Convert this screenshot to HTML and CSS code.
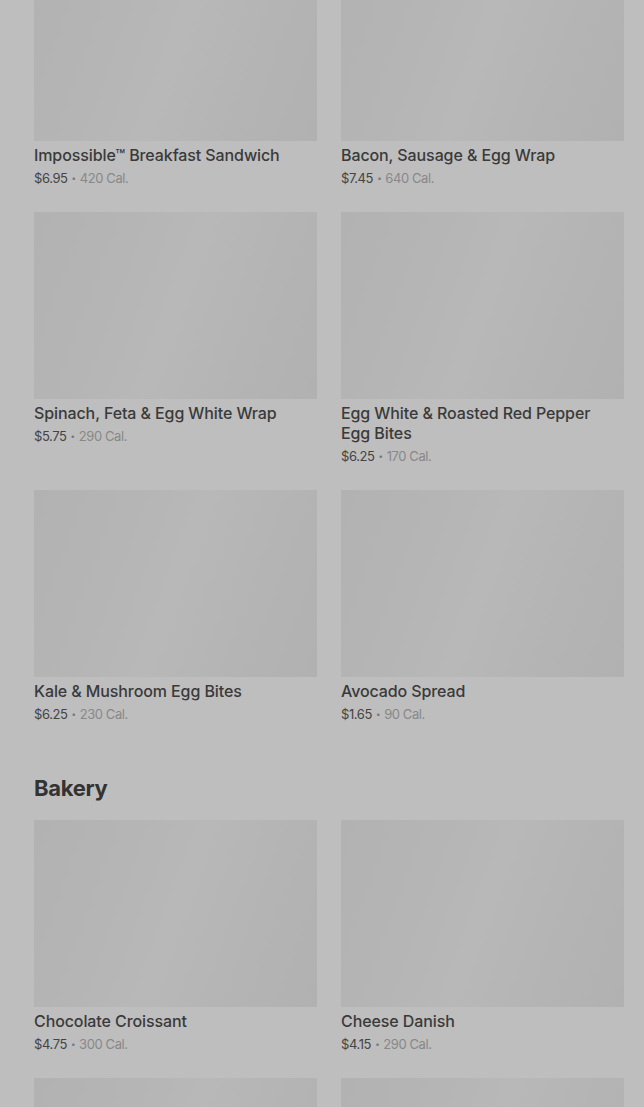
FILE: index.html
```html
<!DOCTYPE html>
<html>
<head>
<meta charset="utf-8">
<link rel="stylesheet" href="styles.css">
</head>
<body>
<main class="menu">
  <section class="grid">
    <div class="card"><div class="thumb"></div><div class="name">Impossible™ Breakfast Sandwich</div><div class="meta"><span class="price">$6.95</span><span class="dot">•</span><span class="cal">420 Cal.</span></div></div>
    <div class="card"><div class="thumb"></div><div class="name">Bacon, Sausage &amp; Egg Wrap</div><div class="meta"><span class="price">$7.45</span><span class="dot">•</span><span class="cal">640 Cal.</span></div></div>
    <div class="card"><div class="thumb"></div><div class="name">Spinach, Feta &amp; Egg White Wrap</div><div class="meta"><span class="price">$5.75</span><span class="dot">•</span><span class="cal">290 Cal.</span></div></div>
    <div class="card"><div class="thumb"></div><div class="name">Egg White &amp; Roasted Red Pepper Egg Bites</div><div class="meta"><span class="price">$6.25</span><span class="dot">•</span><span class="cal">170 Cal.</span></div></div>
    <div class="card"><div class="thumb"></div><div class="name">Kale &amp; Mushroom Egg Bites</div><div class="meta"><span class="price">$6.25</span><span class="dot">•</span><span class="cal">230 Cal.</span></div></div>
    <div class="card"><div class="thumb"></div><div class="name">Avocado Spread</div><div class="meta"><span class="price">$1.65</span><span class="dot">•</span><span class="cal">90 Cal.</span></div></div>
  </section>
  <h2 class="section-title">Bakery</h2>
  <section class="grid">
    <div class="card"><div class="thumb"></div><div class="name">Chocolate Croissant</div><div class="meta"><span class="price">$4.75</span><span class="dot">•</span><span class="cal">300 Cal.</span></div></div>
    <div class="card"><div class="thumb"></div><div class="name">Cheese Danish</div><div class="meta"><span class="price">$4.15</span><span class="dot">•</span><span class="cal">290 Cal.</span></div></div>
    <div class="card"><div class="thumb"></div></div>
    <div class="card"><div class="thumb"></div></div>
  </section>
</main>
</body>
</html>
```
FILE: styles.css
```css
html, body {
  margin: 0;
  padding: 0;
  background: #bebebe;
  overflow: hidden;
}
body {
  font-family: Inter, "Noto Sans", sans-serif;
  color: #333;
}
.menu {
  margin-top: -46px;
  padding: 0 20px 0 34px;
}
.grid {
  display: grid;
  grid-template-columns: 283px 283px;
  column-gap: 24px;
  row-gap: 24px;
}
.card {
  display: flex;
  flex-direction: column;
}
.thumb {
  height: 187px;
  margin-bottom: 4px;
  background: linear-gradient(110deg, #b2b2b2 0%, #b5b5b5 30%, #b8b8b8 50%, #b4b4b4 75%, #b1b1b1 100%);
}
.name {
  font-size: 16px;
  line-height: 20px;
  font-weight: 500;
  color: #3a3a3a;
  letter-spacing: -0.1px;
  padding-right: 6px;
}
.meta {
  margin-top: 3px;
  font-size: 13px;
  line-height: 20px;
  letter-spacing: -0.4px;
  color: #888;
  display: flex;
  align-items: center;
}
.price {
  color: #444;
}
.dot {
  font-size: 8px;
  margin: 0 4px;
  color: #777;
}
.cal {
  color: #888;
}
.section-title {
  margin: 50px 0 18px;
  font-size: 22px;
  line-height: 28px;
  font-weight: 700;
  color: #333;
  letter-spacing: -0.3px;
}
```
